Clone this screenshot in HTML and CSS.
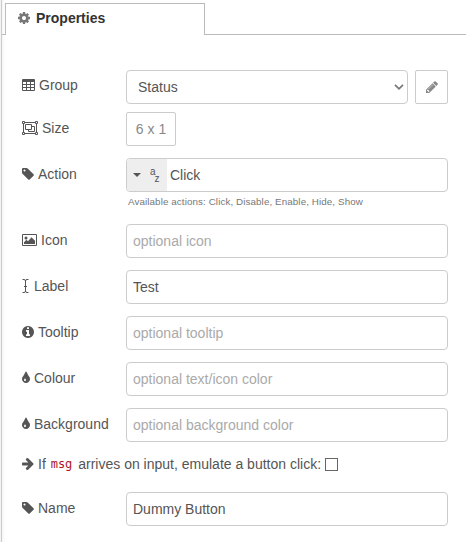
FILE: index.html
```html
<!DOCTYPE html>
<html lang="en">
<head>
<meta charset="utf-8">
<title>Properties</title>
<link rel="stylesheet" href="styles.css">
</head>
<body>
<svg class="defs" width="0" height="0">
  <symbol id="tag" viewBox="128 0 1536 1792"><path d="M576 448q0-53-37.500-90.500t-90.500-37.500-90.500 37.500-37.500 90.500 37.500 90.500 90.500 37.500 90.500-37.500 37.500-90.500zm1067 576q0 53-37 90l-491 492q-39 37-91 37-53 0-90-37l-715-716q-38-37-64.500-101t-26.500-117v-416q0-52 38-90t90-38h416q53 0 117 26.500t102 64.500l715 714q37 39 37 91z"/></symbol>
  <symbol id="tint" viewBox="384 0 1024 1792"><path d="M896 1152q0-36-20-69-1-1-15.500-22.500t-25.500-38-25-44-21-50.500q-4-16-21-16t-21 16q-7 23-21 50.500t-25 44-25.500 38-15.500 22.500q-20 33-20 69 0 53 37.500 90.500t90.500 37.500 90.500-37.500 37.500-90.500zm512-128q0 212-150 362t-362 150-362-150-150-362q0-145 81-275 6-9 62.500-90.500t101-151 99.500-178 83-201.500q9-30 34-47t51-17 51.500 17 33.500 47q28 93 83 201.500t99.500 178 101 151 62.500 90.500q81 127 81 275z"/></symbol>
</svg>
<div class="tray">
  <div class="tabs">
    <div class="tab-gap"></div>
    <div class="tab">
      <svg class="icon gear" width="12" height="14" viewBox="128 0 1536 1792"><path d="M1152 896q0-106-75-181t-181-75-181 75-75 181 75 181 181 75 181-75 75-181zm512-109v222q0 12-8 23t-20 13l-185 28q-19 54-39 91 35 50 107 138 10 12 10 25t-9 23q-27 37-99 108t-94 71q-12 0-26-9l-138-108q-44 23-91 38-16 136-29 186-7 28-36 28h-222q-14 0-24.500-8.500t-11.500-21.500l-28-184q-49-16-90-37l-141 107q-10 9-25 9-14 0-25-11-126-114-165-168-7-10-7-23 0-12 8-23 15-21 51-66.500t54-70.500q-27-50-41-99l-183-27q-13-2-21-12.500t-8-23.500v-222q0-12 8-23t19-13l186-28q14-46 39-92-40-57-107-138-10-12-10-24 0-10 9-23 26-36 98.500-107.500t94.500-71.500q13 0 26 10l138 107q44-23 91-38 16-136 29-186 7-28 36-28h222q14 0 24.500 8.500t11.500 21.500l28 184q49 16 90 37l142-107q9-9 24-9 13 0 25 10 129 119 165 170 7 8 7 22 0 12-8 23-15 21-51 66.500t-54 70.500q26 50 41 98l183 28q13 2 21 12.500t8 23.500z"/></svg>
      <span>Properties</span>
    </div>
    <div class="tab-rest"></div>
  </div>
  <form class="form">
    <div class="row group">
      <label class="label"><svg class="icon" width="13" height="14" viewBox="0 0 13 14"><path fill-rule="evenodd" d="M1 1h11q1 0 1 1v10q0 1-1 1H1q-1 0-1-1V2q0-1 1-1zM1 4v2h3V4zm4 0v2h3V4zm4 0v2h3V4zM1 7v2h3V7zm4 0v2h3V7zm4 0v2h3V7zM1 10v2h3v-2zm4 0v2h3v-2zm4 0v2h3v-2z"/></svg>Group</label>
      <div class="field select"><span>Status</span><svg width="10" height="6" viewBox="0 0 10 6"><path d="M1 .8l4 4 4-4"/></svg></div>
      <button type="button" class="btn edit"><svg class="icon" width="12" height="14" viewBox="128 0 1536 1792"><path d="M491 1536l91-91-235-235-91 91v107h128v128h107zm523-928q0-22-22-22-10 0-17 7l-542 542q-7 7-7 17 0 22 22 22 10 0 17-7l542-542q7-7 7-17zm-54-192l416 416-832 832h-416v-416zm683 96q0 53-37 90l-166 166-416-416 166-165q36-38 90-38 53 0 91 38l235 234q37 39 37 91z"/></svg></button>
    </div>
    <div class="row size">
      <label class="label"><svg class="icon line" width="16" height="14" viewBox="0 0 16 14"><path d="M1.500 2.500v9M14.500 2.500v9M2.500 1.500h11M2.500 12.500h11M.5.5h2v2h-2zM13.500.5h2v2h-2zM.5 11.500h2v2h-2zM13.500 11.500h2v2h-2zM3.500 3.500h6v5h-6zM9.500 5.500h3v5h-6v-2"/></svg>Size</label>
      <button type="button" class="btn">6 x 1</button>
    </div>
    <div class="row action">
      <label class="label"><svg class="icon" width="12" height="14"><use href="#tag"/></svg>Action</label>
      <div class="field typed">
        <div class="type"><i class="caret"></i><span class="az"><span>a</span><span class="z">z</span></span></div>
        <span class="value">Click</span>
      </div>
    </div>
    <div class="hint">Available actions: Click, Disable, Enable, Hide, Show</div>
    <div class="row">
      <label class="label" for="icon"><svg class="icon" width="15" height="14" viewBox="0 0 15 14"><path fill-rule="evenodd" d="M1 1h13q1 0 1 1v10q0 1-1 1H1q-1 0-1-1V2q0-1 1-1zM1 2v10h13V2z"/><circle cx="4" cy="5" r="1.500"/><path d="M2 11V9.300l2.500-2.500L6 8.200 9.500 4.300 13 7.800V11z"/></svg>Icon</label>
      <input class="field" id="icon" placeholder="optional icon">
    </div>
    <div class="row">
      <label class="label" for="label"><svg class="icon line" width="8" height="14" viewBox="0 0 8 14"><path d="M.5.500h1.500q1.500 0 1.500 1.500v10q0 1.500-1.500 1.500H.5M6.500.500H5Q3.500.500 3.500 2M6.500 13.500H5q-1.500 0-1.500-1.500M2 7.500h3"/></svg>Label</label>
      <input class="field" id="label" value="Test">
    </div>
    <div class="row">
      <label class="label" for="tooltip"><svg class="icon" width="12" height="14" viewBox="128 0 1536 1792"><path d="M1152 1376v-160q0-14-9-23t-23-9h-96v-512q0-14-9-23t-23-9h-320q-14 0-23 9t-9 23v160q0 14 9 23t23 9h96v320h-96q-14 0-23 9t-9 23v160q0 14 9 23t23 9h448q14 0 23-9t9-23zm-128-896v-160q0-14-9-23t-23-9h-192q-14 0-23 9t-9 23v160q0 14 9 23t23 9h192q14 0 23-9t9-23zm640 416q0 209-103 385.500t-279.500 279.500-385.500 103-385.500-103-279.500-279.500-103-385.500 103-385.500 279.500-279.500 385.500-103 385.500 103 279.500 279.500 103 385.500z"/></svg>Tooltip</label>
      <input class="field" id="tooltip" placeholder="optional tooltip">
    </div>
    <div class="row">
      <label class="label" for="colour"><svg class="icon" width="8" height="14"><use href="#tint"/></svg>Colour</label>
      <input class="field" id="colour" placeholder="optional text/icon color">
    </div>
    <div class="row">
      <label class="label" for="background"><svg class="icon" width="8" height="14"><use href="#tint"/></svg>Background</label>
      <input class="field" id="background" placeholder="optional background color">
    </div>
    <div class="row emulate">
      <label class="label wide" for="emulate"><svg class="icon" width="12" height="14" viewBox="128 64 1536 1792"><path d="M1600 960q0 54-37 91l-651 651q-39 37-91 37-51 0-90-37l-75-75q-38-38-38-91t38-91l293-293h-704q-52 0-84.500-37.500t-32.500-90.500v-128q0-53 32.500-90.500t84.500-37.500h704l-293-294q-38-36-38-90t38-90l75-75q38-38 90-38 53 0 91 38l651 651q37 35 37 90z"/></svg>If <code>msg</code> arrives on input, emulate a button click:</label>
      <input type="checkbox" class="check" id="emulate">
    </div>
    <div class="row">
      <label class="label" for="name"><svg class="icon" width="12" height="14"><use href="#tag"/></svg>Name</label>
      <input class="field" id="name" value="Dummy Button">
    </div>
  </form>
</div>
</body>
</html>
```
FILE: styles.css
```css
* { box-sizing: border-box; }

body {
  margin: 0;
  height: 542px;
  overflow: hidden;
  display: flex;
  background: #f3f3f3;
  color: #555;
  font: 14px/20px "Liberation Sans", Arial, sans-serif;
}

.defs { display: none; }

.tray {
  flex: 1;
  margin-left: 1px;
  border-left: 1px solid #ccc;
  background: linear-gradient(to right, #f6f6f6, #fff 4px);
}

.tabs {
  display: flex;
  height: 35px;
  padding-top: 3px;
}

.tab-gap { width: 3px; border-bottom: 1px solid #bbb; }
.tab-rest { flex: 1; border-bottom: 1px solid #bbb; }

.tab {
  width: 200px;
  padding: 4px 0 0 12px;
  border: 1px solid #bbb;
  border-bottom: 0;
  background: #fff;
  color: #333;
  font-weight: bold;
  display: flex;
  align-items: flex-start;
  gap: 6px;
}

.icon { fill: currentColor; flex: none; }
.line { fill: none; stroke: currentColor; stroke-width: 1; }
.gear { color: #777; margin-top: 3px; }

.form {
  padding: 35px 18px 0 20px;
  display: flex;
  flex-direction: column;
}

.row {
  display: flex;
  height: 34px;
  margin-bottom: 12px;
}

.label {
  width: 104px;
  height: 32px;
  display: flex;
  align-items: center;
  white-space: pre;
}

.label .icon { margin-right: 4px; }
.label.wide { width: auto; }

.field {
  flex: 1;
  min-width: 0;
  height: 34px;
  padding: 0 6px;
  border: 1px solid #ccc;
  border-radius: 4px;
  background: #fff;
  color: #555;
  font: inherit;
  outline: 0;
}

.field::placeholder { color: #aaa; opacity: 1; }

.select {
  display: flex;
  align-items: center;
  justify-content: space-between;
  padding: 0 3px 0 11px;
}

.select svg { fill: none; stroke: #777; stroke-width: 1.7; }

.btn {
  width: 50px;
  height: 34px;
  padding: 0;
  border: 1px solid #ccc;
  border-radius: 2px;
  background: #fff;
  color: #888;
  font: inherit;
}

.edit {
  width: 33px;
  margin-left: 7px;
  display: flex;
  align-items: center;
  justify-content: center;
}

.group { margin-bottom: 8px; }
.group .label { height: 30px; }

.typed {
  display: flex;
  align-items: center;
  padding: 0;
  overflow: hidden;
}

.type {
  width: 40px;
  height: 100%;
  background: #eee;
  display: flex;
  align-items: center;
  padding-left: 6px;
  gap: 9px;
}

.caret {
  border: 4px solid transparent;
  border-top-color: #555;
  border-bottom: 0;
}

.az {
  display: flex;
  font-size: 10px;
  line-height: 10px;
  padding-bottom: 7px;
}

.z { padding-top: 7px; margin-bottom: -7px; margin-left: -1px; }
.value { margin-left: 3px; }
.action { margin-bottom: 0; }

.hint {
  height: 32px;
  padding: 0 0 0 106px;
  color: #777;
  font-size: 9.8px;
  letter-spacing: 0.1px;
  line-height: 20px;
}

.emulate {
  height: 26px;
  align-items: center;
}

.emulate .label { height: 20px; margin-top: -6px; }

code {
  padding: 0 2px 0 1px;
  color: #ad1625;
  font: 12px/20px "DejaVu Sans Mono", monospace;
}

.check {
  appearance: none;
  width: 13px;
  height: 13px;
  margin: -5px 0 0 4px;
  border: 1px solid #666;
  background: #fff;
}
```
